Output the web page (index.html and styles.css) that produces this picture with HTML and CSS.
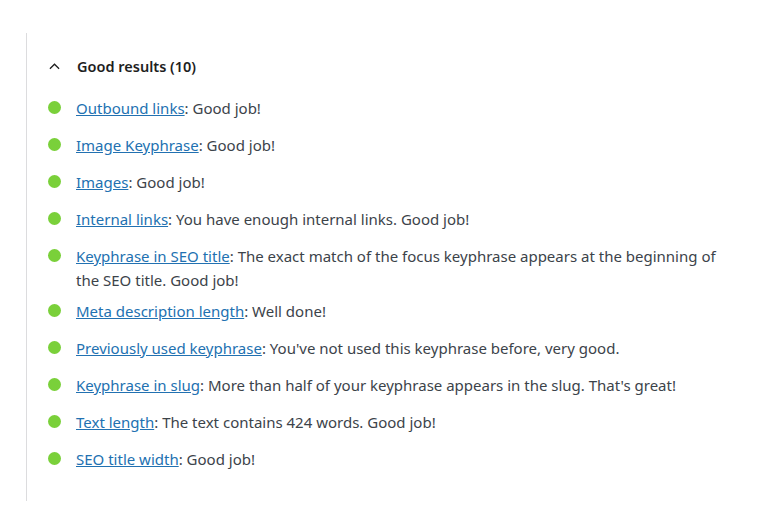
FILE: index.html
```html
<!doctype html>
<html>
	<head>
		<title>Good results</title>
		<meta charset="utf8">
		<link rel="stylesheet" href="styles.css">
	</head>
	<body>
		<div class="panel">
			<button class="toggle">
				<svg class="chevron" viewBox="0 0 12 7">
					<polyline points="1,6 6,1 11,6" />
				</svg>
				<span>Good results (10)</span>
			</button>
			<ul class="results">
				<li><span class="bullet"></span><p><a href="#">Outbound links</a>: Good job!</p></li>
				<li><span class="bullet"></span><p><a href="#">Image Keyphrase</a>: Good job!</p></li>
				<li><span class="bullet"></span><p><a href="#">Images</a>: Good job!</p></li>
				<li><span class="bullet"></span><p><a href="#">Internal links</a>: You have enough internal links. Good job!</p></li>
				<li><span class="bullet"></span><p><a href="#">Keyphrase in SEO title</a>: The exact match of the focus keyphrase appears at the beginning of the SEO title. Good job!</p></li>
				<li><span class="bullet"></span><p><a href="#">Meta description length</a>: Well done!</p></li>
				<li><span class="bullet"></span><p><a href="#">Previously used keyphrase</a>: You've not used this keyphrase before, very good.</p></li>
				<li><span class="bullet"></span><p><a href="#">Keyphrase in slug</a>: More than half of your keyphrase appears in the slug. That's great!</p></li>
				<li><span class="bullet"></span><p><a href="#">Text length</a>: The text contains 424 words. Good job!</p></li>
				<li><span class="bullet"></span><p><a href="#">SEO title width</a>: Good job!</p></li>
			</ul>
		</div>
	</body>
</html>
```

FILE: styles.css
```css
* {
	margin: 0;
	padding: 0;
	box-sizing: border-box;
}
html, body {
	background: #fff;
	font-family: "Noto Sans", "Open Sans", sans-serif;
	font-size: 15px;
	color: #3c434a;
}
body {
	padding: 33px 0 0 26px;
}
.panel {
	border-left: 1px solid #dcdcde;
	width: 702px;
	height: 468px;
	padding: 20px 0 0 21px;
}
.toggle {
	display: flex;
	align-items: center;
	gap: 17px;
	background: none;
	border: 0;
	font: inherit;
	font-size: 14.5px;
	font-weight: 600;
	color: #1e1e1e;
	height: 26px;
	margin-bottom: 17px;
}
.chevron {
	width: 11px;
	height: 7px;
	fill: none;
	stroke: #1e1e1e;
	stroke-width: 1.4;
	margin-left: 1px;
}
.results {
	list-style: none;
}
.results li {
	display: flex;
	align-items: flex-start;
	min-height: 30px;
	margin-bottom: 7px;
}
.bullet {
	flex: none;
	width: 13px;
	height: 13px;
	border-radius: 50%;
	background: #7ad03a;
	margin: 5px 15px 0 0;
}
.results p {
	line-height: 24px;
}
.results a {
	color: #2271b1;
	text-decoration: underline;
}
```
